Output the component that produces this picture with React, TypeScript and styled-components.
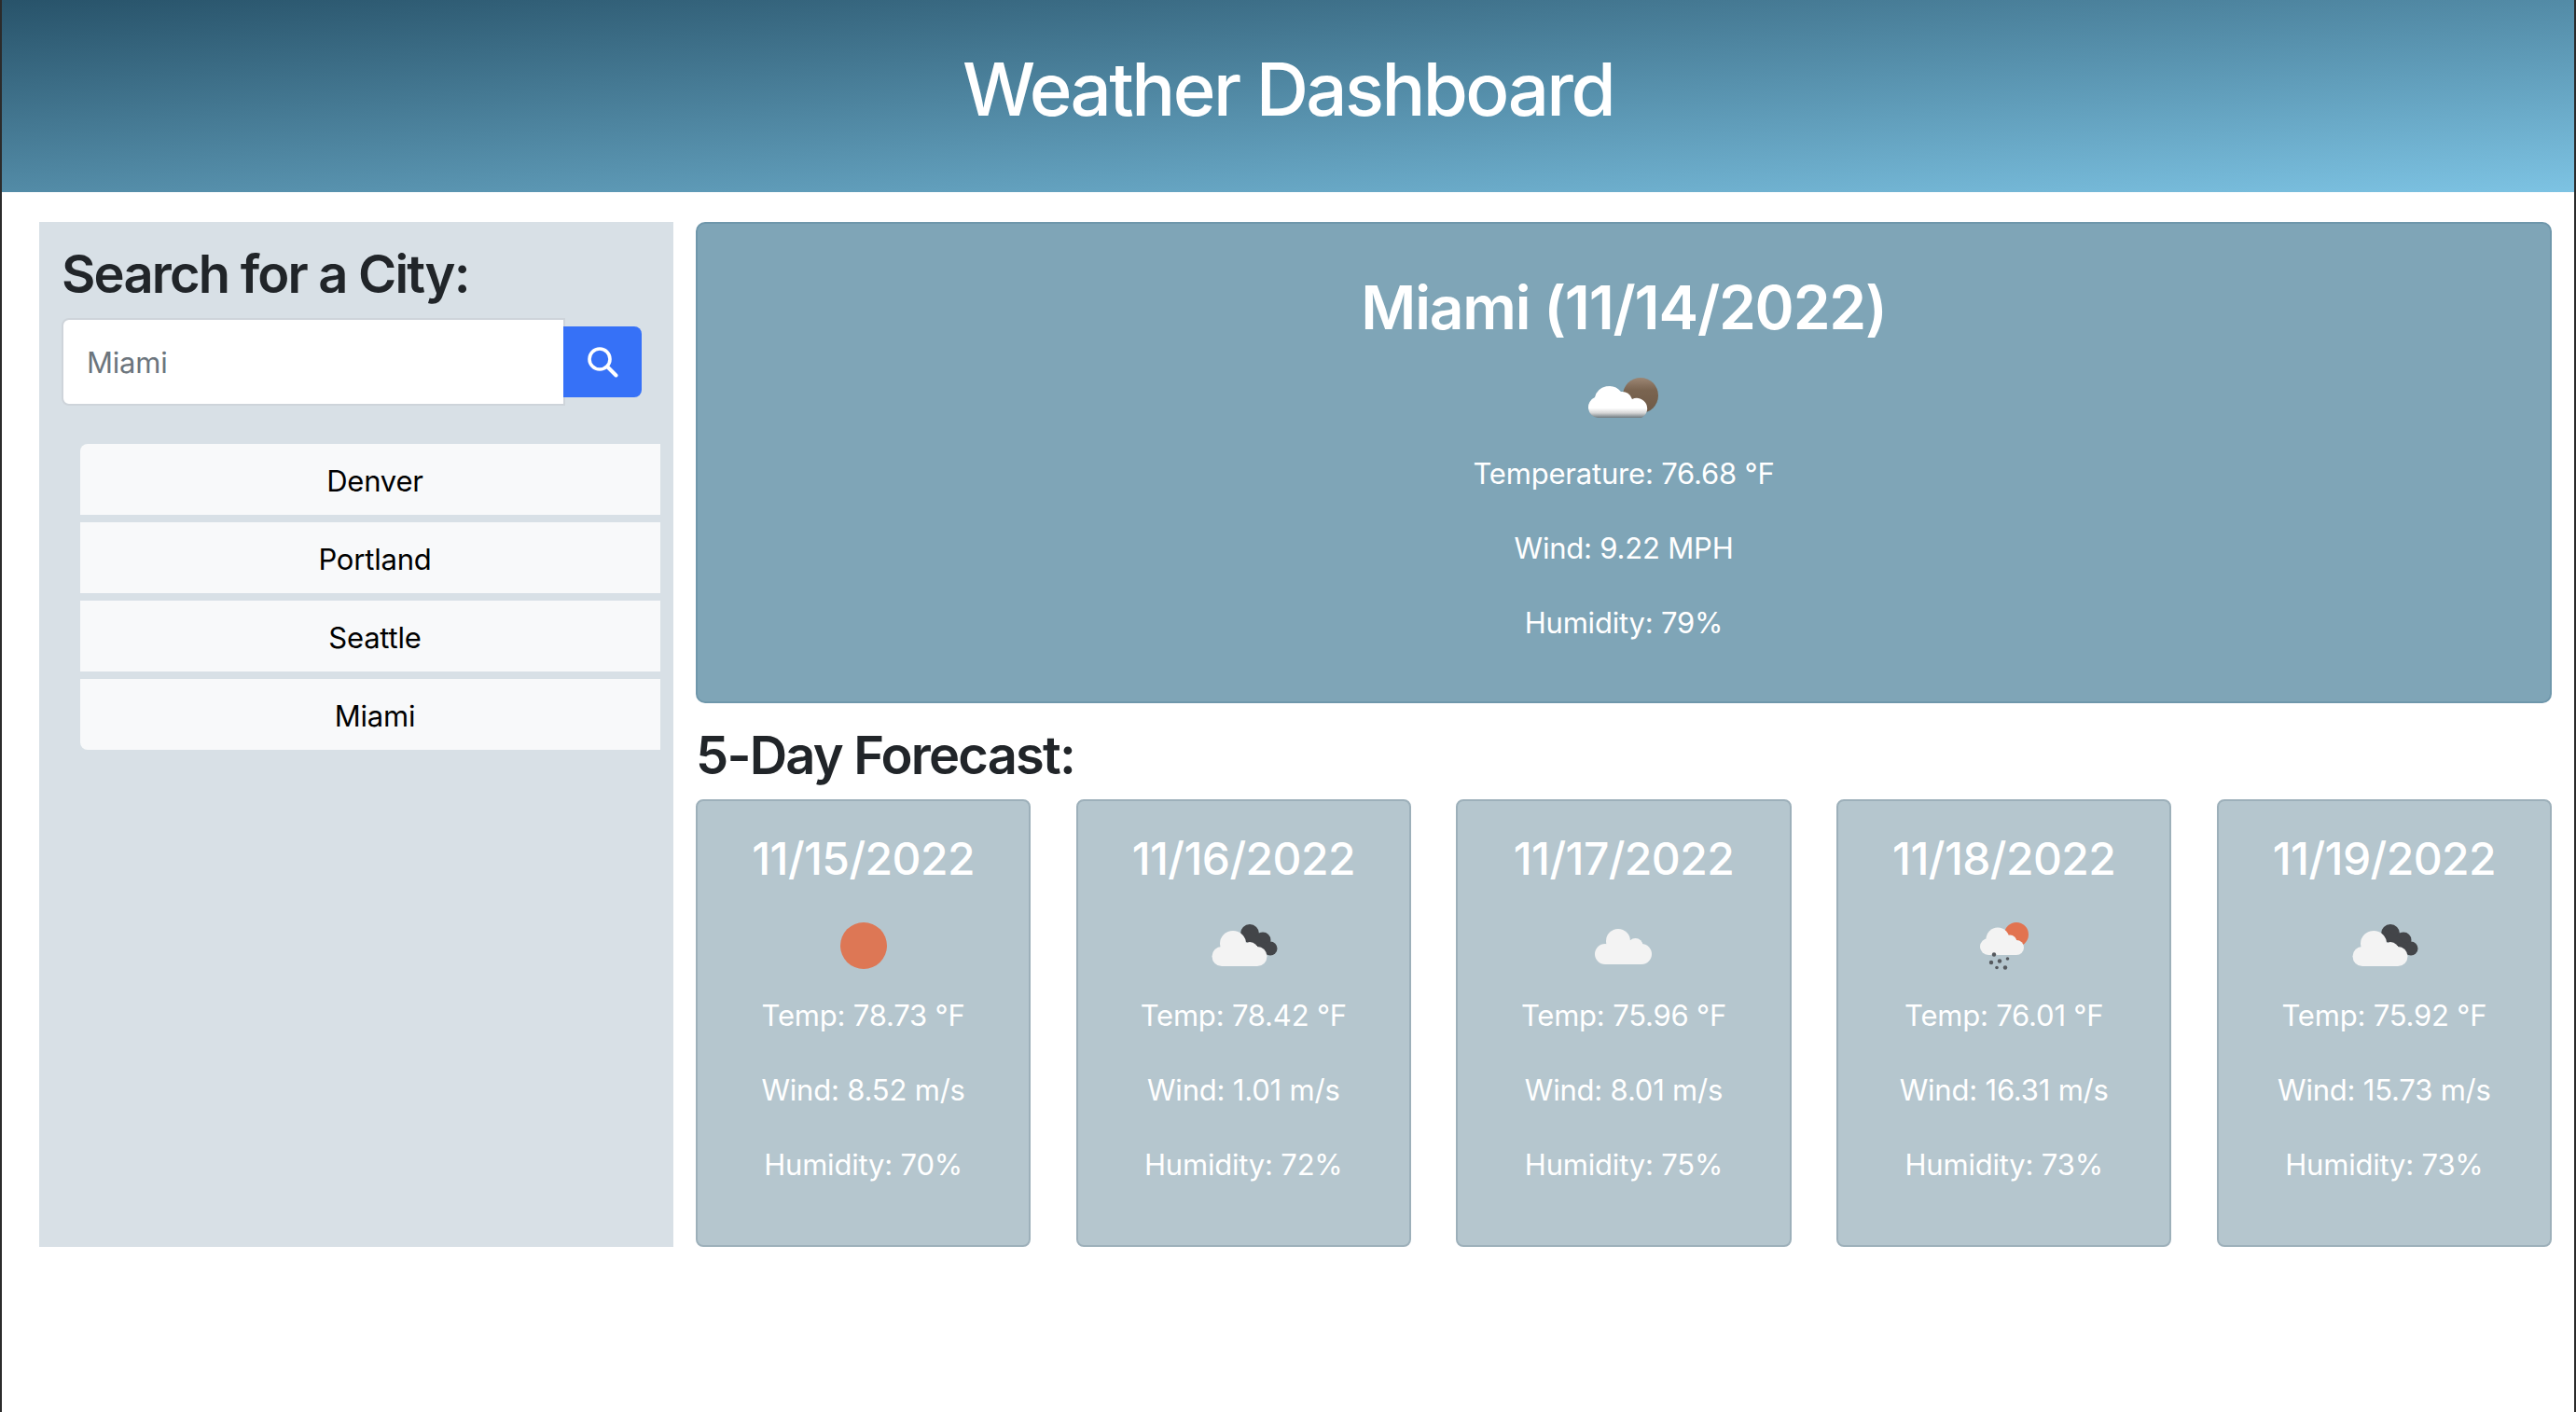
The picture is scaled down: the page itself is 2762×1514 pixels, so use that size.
import React from 'react';
import styled, { createGlobalStyle } from 'styled-components';

const GlobalStyle = createGlobalStyle`
  html, body {
    margin: 0;
    background: #fff;
  }

  * {
    box-sizing: border-box;
  }
`;

const Page = styled.div`
  border-left: 2px solid #2b2b2b;
  border-right: 2px solid #2b2b2b;
  color: #212529;
  font-family: Inter, "Liberation Sans", sans-serif;
  height: 1514px;
  width: 2762px;
`;

const Header = styled.header`
  align-items: center;
  background: linear-gradient(to bottom right, #28536a, #7dc3e3);
  display: flex;
  height: 206px;
  justify-content: center;
  padding-bottom: 16px;
`;

const Title = styled.h1`
  color: #fff;
  font-size: 78px;
  font-weight: 500;
  letter-spacing: -2.6px;
  margin: 0;
`;

const Content = styled.div`
  display: flex;
  gap: 24px;
  padding: 32px 24px 0 40px;
`;

const Sidebar = styled.aside`
  background: #d8e0e6;
  flex: 0 0 680px;
  padding: 22px 14px 0 24px;
`;

const SectionHeading = styled.h2`
  font-size: 56px;
  font-weight: 600;
  letter-spacing: -1.8px;
  line-height: 68px;
  margin: 0;
`;

const SearchRow = styled.form`
  align-items: center;
  display: flex;
  margin-top: 13px;
`;

const SearchInput = styled.input`
  background: #fff;
  border: 2px solid #ced4da;
  border-radius: 8px 0 0 8px;
  font: 31px Inter, "Liberation Sans", sans-serif;
  height: 94px;
  letter-spacing: -0.2px;
  outline: none;
  padding: 0 25px;
  width: 540px;

  &::placeholder {
    color: #6c757d;
    opacity: 1;
  }
`;

const SearchButton = styled.button`
  align-items: center;
  background: #3671f7;
  border: 0;
  border-radius: 0 8px 8px 0;
  color: #fff;
  display: flex;
  height: 76px;
  justify-content: center;
  margin-left: -2px;
  padding: 0;
  width: 84px;
`;

const CityList = styled.ul`
  display: flex;
  flex-direction: column;
  gap: 8px;
  list-style: none;
  margin: 41px 0 0 20px;
  padding: 0;
`;

const CityItem = styled.li`
  align-items: center;
  background: #f8f9fa;
  color: #000;
  display: flex;
  font-size: 31px;
  height: 76px;
  justify-content: center;
  letter-spacing: -0.2px;
  padding: 2px 0 0 10px;

  &:first-child {
    border-top-left-radius: 8px;
  }

  &:last-child {
    border-bottom-left-radius: 8px;
  }
`;

const Main = styled.main`
  flex: 1;
  min-width: 0;
`;

const Hero = styled.section`
  align-items: center;
  background: #7fa5b7;
  border: 2px solid #6f97ab;
  border-radius: 10px;
  color: #fff;
  display: flex;
  flex-direction: column;
  height: 516px;
  padding-top: 52px;
`;

const HeroTitle = styled.h2`
  font-size: 64px;
  font-weight: 600;
  letter-spacing: -1.2px;
  line-height: 76px;
  margin: 0;
`;

const Stat = styled.p`
  font-size: 31px;
  letter-spacing: -0.2px;
  line-height: 42px;
  margin: 0 0 38px;
`;

const HeroIcon = styled.div`
  height: 88px;
  margin: 15px 0 16px;
`;

const ForecastHeading = styled(SectionHeading)`
  margin: 22px 0 13px;
`;

const ForecastRow = styled.div`
  display: grid;
  gap: 48.5px;
  grid-template-columns: repeat(5, 1fr);
`;

const ForecastCard = styled.article`
  align-items: center;
  background: #b5c6ce;
  border: 2px solid #9db0ba;
  border-radius: 8px;
  color: #fff;
  display: flex;
  flex-direction: column;
  height: 480px;
  padding-top: 32px;
`;

const ForecastDate = styled.h3`
  font-size: 48px;
  font-weight: 500;
  letter-spacing: -0.6px;
  line-height: 60px;
  margin: 0;
`;

const CardIcon = styled.div`
  height: 88px;
  margin: 19px 0 10px;
`;

const Glyph = styled.svg`
  display: block;
  filter: blur(0.5px);
  height: 88px;
  width: 88px;
`;

type IconKind = 'hero' | 'sun' | 'overcast' | 'cloud' | 'rain';

const WeatherIcon = ({ kind }: { kind: IconKind }) => {
  if (kind === 'sun') {
    return (
      <Glyph viewBox="0 0 88 88">
        <circle cx="44" cy="44" r="25" fill="#dd7755" />
      </Glyph>
    );
  }
  if (kind === 'overcast') {
    return (
      <Glyph viewBox="0 0 88 88">
        <g fill="#434549">
          <circle cx="51" cy="31" r="10" />
          <circle cx="65" cy="38" r="8.5" />
          <circle cx="73" cy="47" r="7.5" />
          <path d="M45 26 L70 42 L68 54 L50 50 Z" />
        </g>
        <g fill="#f3f3f3">
          <circle cx="33" cy="42" r="14" />
          <circle cx="21" cy="55.5" r="10.5" />
          <circle cx="51" cy="49" r="9" />
          <circle cx="59" cy="55.5" r="10.5" />
          <rect x="21" y="44" width="38" height="22" />
        </g>
      </Glyph>
    );
  }
  if (kind === 'cloud') {
    return (
      <Glyph viewBox="0 0 88 88">
        <g fill="#f3f3f3">
          <circle cx="38" cy="39" r="13" />
          <circle cx="56.5" cy="44" r="8" />
          <circle cx="24" cy="53" r="11" />
          <circle cx="63" cy="53" r="11" />
          <rect x="24" y="44" width="39" height="20" />
        </g>
      </Glyph>
    );
  }
  if (kind === 'rain') {
    return (
      <Glyph viewBox="0 0 88 88">
        <circle cx="57" cy="32" r="13" fill="#e27350" />
        <g fill="#f3f3f3">
          <circle cx="37" cy="37" r="12.5" />
          <circle cx="27" cy="45" r="9" />
          <circle cx="50" cy="40" r="7.5" />
          <circle cx="57" cy="46" r="8" />
          <rect x="27" y="40" width="30" height="14" />
        </g>
        <g fill="#55595e">
          <circle cx="33" cy="53.5" r="2.2" />
          <circle cx="30" cy="62" r="2.2" />
          <circle cx="39" cy="60.5" r="2.2" />
          <circle cx="47.5" cy="58" r="1.8" />
          <circle cx="36" cy="67.5" r="1.8" />
          <circle cx="45" cy="67.5" r="2.2" />
        </g>
      </Glyph>
    );
  }
  return (
    <Glyph viewBox="0 0 88 88">
      <defs>
        <linearGradient id="heroSun" x1="0" y1="0" x2="0" y2="1">
          <stop offset="0" stopColor="#9c8674" />
          <stop offset="0.35" stopColor="#7a6450" />
          <stop offset="1" stopColor="#6e5a47" />
        </linearGradient>
        <linearGradient id="heroCloud" x1="0" y1="28" x2="0" y2="65" gradientUnits="userSpaceOnUse">
          <stop offset="0" stopColor="#fff" />
          <stop offset="0.72" stopColor="#fff" />
          <stop offset="0.86" stopColor="#d5d5d5" />
          <stop offset="1" stopColor="#6f7a80" />
        </linearGradient>
      </defs>
      <circle cx="62" cy="41" r="19" fill="url(#heroSun)" />
      <path
        d="M16 65 A11.5 11.5 0 0 1 13 43 A16 16 0 0 1 41 37 A11 11 0 0 1 53 45 A10 10 0 0 1 63 65 Z"
        fill="url(#heroCloud)"
      />
    </Glyph>
  );
};

const SearchIcon = () => (
  <svg width="34" height="34" viewBox="0 0 34 34" fill="none" stroke="currentColor" strokeLinecap="round">
    <circle cx="14" cy="14" r="11" strokeWidth="3.6" />
    <path d="M22.5 22.5 L31.5 31.5" strokeWidth="4" />
  </svg>
);

const cities = ['Denver', 'Portland', 'Seattle', 'Miami'];

const forecast: { date: string; temp: string; wind: string; humidity: string; icon: IconKind }[] = [
  { date: '11/15/2022', temp: '78.73', wind: '8.52', humidity: '70', icon: 'sun' },
  { date: '11/16/2022', temp: '78.42', wind: '1.01', humidity: '72', icon: 'overcast' },
  { date: '11/17/2022', temp: '75.96', wind: '8.01', humidity: '75', icon: 'cloud' },
  { date: '11/18/2022', temp: '76.01', wind: '16.31', humidity: '73', icon: 'rain' },
  { date: '11/19/2022', temp: '75.92', wind: '15.73', humidity: '73', icon: 'overcast' },
];

const App = () => (
  <Page>
    <GlobalStyle />
    <Header>
      <Title>Weather Dashboard</Title>
    </Header>
    <Content>
      <Sidebar>
        <SectionHeading>Search for a City:</SectionHeading>
        <SearchRow>
          <SearchInput placeholder="Miami" />
          <SearchButton type="button" aria-label="Search">
            <SearchIcon />
          </SearchButton>
        </SearchRow>
        <CityList>
          {cities.map((city) => (
            <CityItem key={city}>{city}</CityItem>
          ))}
        </CityList>
      </Sidebar>
      <Main>
        <Hero>
          <HeroTitle>Miami (11/14/2022)</HeroTitle>
          <HeroIcon>
            <WeatherIcon kind="hero" />
          </HeroIcon>
          <Stat>Temperature: 76.68 °F</Stat>
          <Stat>Wind: 9.22 MPH</Stat>
          <Stat>Humidity: 79%</Stat>
        </Hero>
        <ForecastHeading>5-Day Forecast:</ForecastHeading>
        <ForecastRow>
          {forecast.map(({ date, temp, wind, humidity, icon }) => (
            <ForecastCard key={date}>
              <ForecastDate>{date}</ForecastDate>
              <CardIcon>
                <WeatherIcon kind={icon} />
              </CardIcon>
              <Stat>Temp: {temp} °F</Stat>
              <Stat>Wind: {wind} m/s</Stat>
              <Stat>Humidity: {humidity}%</Stat>
            </ForecastCard>
          ))}
        </ForecastRow>
      </Main>
    </Content>
  </Page>
);

export default App;
